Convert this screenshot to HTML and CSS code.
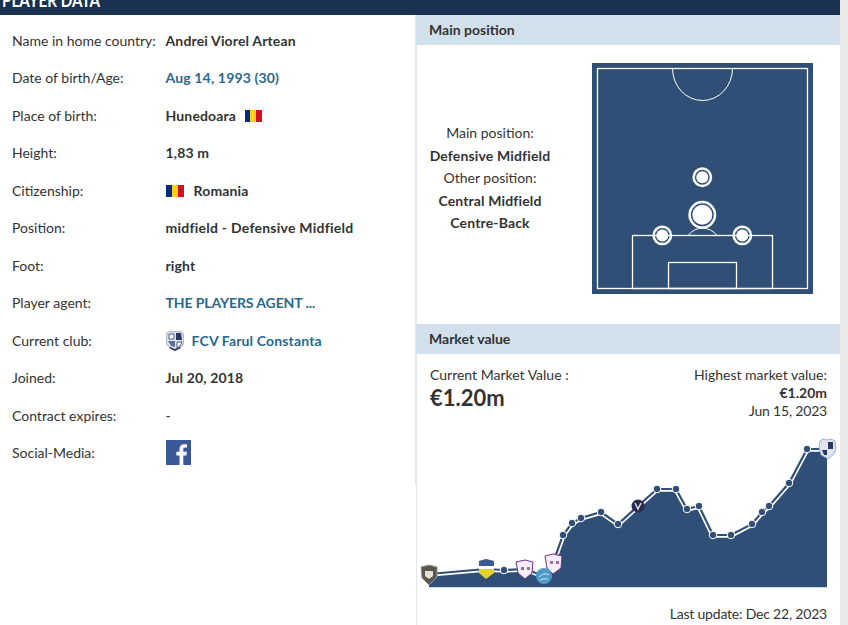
FILE: index.html
```html
<!DOCTYPE html>
<html lang="en">
<head>
  <meta charset="UTF-8" />
  <title>Player data</title>
  <link rel="stylesheet" href="styles.css">
</head>
<body>
  <div class="page">
    <div class="box">
      <h2 class="box-title"><span class="box-title-text">PLAYER DATA</span></h2>
      <div class="columns">
        <div class="data">
          <div class="row"><span class="label">Name in home country:</span><span class="value">Andrei Viorel Artean</span></div>
          <div class="row"><span class="label">Date of birth/Age:</span><a class="value link">Aug 14, 1993 (30)</a></div>
          <div class="row"><span class="label">Place of birth:</span><span class="value">Hunedoara <span class="flag flag-small"><i></i><i></i><i></i></span></span></div>
          <div class="row"><span class="label">Height:</span><span class="value">1,83 m</span></div>
          <div class="row"><span class="label">Citizenship:</span><span class="value"><span class="flag flag-big"><i></i><i></i><i></i></span>Romania</span></div>
          <div class="row"><span class="label">Position:</span><span class="value wide">midfield - Defensive Midfield</span></div>
          <div class="row"><span class="label">Foot:</span><span class="value">right</span></div>
          <div class="row"><span class="label">Player agent:</span><a class="value link agent">THE PLAYERS AGENT ...</a></div>
          <div class="row"><span class="label">Current club:</span><a class="value link club">
            <svg class="crest" width="18" height="21" viewBox="0 0 18 21">
              <path d="M1 3 L4 1 L7 2 L9 1 L11 2 L14 1 L17 3 L18 9 L17 15 L13 18 L9 21 L5 18 L1 15 L0 9Z" fill="#dfe3ee" stroke="#8390b5" stroke-width=".7"/>
              <path d="M10 3h5l1 7h-6z" fill="#27375f"/><path d="M2 11h7v6l-4-1z" fill="#5f6f9c"/>
              <path d="M3 4h5v5H3z" fill="#fff" stroke="#27375f" stroke-width=".8"/><path d="M11 12h5l-2 4-3 2z" fill="#fff" stroke="#27375f" stroke-width=".8"/>
              <path d="M3 18l6 3 6-3-1-1-5 2-5-2z" fill="#27375f"/>
            </svg>FCV Farul Constanta</a></div>
          <div class="row"><span class="label">Joined:</span><span class="value">Jul 20, 2018</span></div>
          <div class="row"><span class="label">Contract expires:</span><span class="value plain">-</span></div>
          <div class="row"><span class="label">Social-Media:</span><span class="value">
            <svg class="fb" width="25" height="25" viewBox="0 0 25 25"><rect width="25" height="25" fill="#3b5998"/><path d="M17.300 25v-9.600h3.100l.5-3.700h-3.600V9.400c0-1.100.3-1.800 1.800-1.800h1.900V4.300c-.3 0-1.500-.1-2.800-.1-2.800 0-4.700 1.700-4.700 4.800v2.700h-3.100v3.700h3.100V25z" fill="#fff"/></svg></span></div>
        </div>
        <div class="side">
          <h3 class="side-title">Main position</h3>
          <div class="position">
            <div class="position-text">
              <div>Main position:</div>
              <b>Defensive Midfield</b>
              <div>Other position:</div>
              <b>Central Midfield</b>
              <b>Centre-Back</b>
            </div>
            <svg class="pitch" width="221" height="231" viewBox="0 0 221 231">
              <rect width="221" height="231" fill="#304f77"/>
              <g fill="none" stroke="#fff" stroke-width="1.300">
                <rect x="5.500" y="5.500" width="210" height="220"/>
                <rect x="40.500" y="172.500" width="140" height="53"/>
                <rect x="76.500" y="199.500" width="68" height="26"/>
                <path d="M80.500 5.500a30 32 0 0 0 60 0" stroke-width="1"/>
                <path d="M96 172.500a18 18 0 0 1 29 0" stroke-width="1"/>
              </g>
              <g class="spot"><circle cx="110.300" cy="114.300" r="8.700"/><circle class="dot" cx="110.300" cy="114.300" r="6"/></g>
              <g class="spot"><circle cx="110.300" cy="151.800" r="12.700"/><circle class="dot" cx="110.300" cy="151.800" r="10"/></g>
              <g class="spot"><circle cx="70.300" cy="172.400" r="8.700"/><circle class="dot" cx="70.300" cy="172.400" r="6"/></g>
              <g class="spot"><circle cx="150.300" cy="172.400" r="8.700"/><circle class="dot" cx="150.300" cy="172.400" r="6"/></g>
            </svg>
          </div>
          <h3 class="side-title">Market value</h3>
          <div class="market">
            <div class="market-head">
              <div>Current Market Value :<div class="market-now">€1.20m</div></div>
              <div class="market-high">Highest market value:<b>€1.20m</b><span class="digits">Jun 15, 2023</span></div>
            </div>
            <svg class="chart" width="424" height="170" viewBox="0 0 424 170">
              <path d="M13 154 L70 149 L88 150 L109 149 L128 156 L137 143 L147 115 L156 103 L165 98 L185 92 L202 104 L222 86 L241 69 L260 69 L271 89 L283 86 L297 115 L315 115 L336 104 L346 92 L353 86 L373 63 L391 29 L411 29 L411 167 L13 167Z" fill="#304f77"/>
              <path d="M13 167H411" stroke="#c6d8e8" stroke-width="1" transform="translate(0 .5)"/>
              <path d="M13 154 L70 149 L88 150 L109 149 L128 156 L137 143 L147 115 L156 103 L165 98 L185 92 L202 104 L222 86 L241 69 L260 69 L271 89 L283 86 L297 115 L315 115 L336 104 L346 92 L353 86 L373 63 L391 29 L411 29" fill="none" stroke="#fff" stroke-width="5.500"/>
              <path d="M13 154 L70 149 L88 150 L109 149 L128 156 L137 143 L147 115 L156 103 L165 98 L185 92 L202 104 L222 86 L241 69 L260 69 L271 89 L283 86 L297 115 L315 115 L336 104 L346 92 L353 86 L373 63 L391 29 L411 29" fill="none" stroke="#304f77" stroke-width="2.200"/>
              <g fill="#304f77" stroke="#fff" stroke-width="1">
                <circle cx="88" cy="150" r="3.800"/><circle cx="147" cy="115" r="3.800"/><circle cx="156" cy="103" r="3.800"/><circle cx="165" cy="98" r="3.800"/><circle cx="185" cy="92" r="3.800"/><circle cx="202" cy="104" r="3.800"/><circle cx="241" cy="69" r="3.800"/><circle cx="260" cy="69" r="3.800"/><circle cx="271" cy="89" r="3.800"/><circle cx="283" cy="86" r="3.800"/><circle cx="297" cy="115" r="3.800"/><circle cx="315" cy="115" r="3.800"/><circle cx="336" cy="104" r="3.800"/><circle cx="346" cy="92" r="3.800"/><circle cx="353" cy="86" r="3.800"/><circle cx="373" cy="63" r="3.800"/><circle cx="391" cy="29" r="3.800"/>
              </g>
              <path d="M5 147 L13 145 L21 147 L21 157 L13 165 L6 158Z" fill="#57564f" stroke="#9a9a92"/><path d="M9 151h8v5l-4 3-4-3z" fill="#e2e0d8"/>
              <path d="M63 141 L70 139 L78 141 L78 153 L70 159 L63 153Z" fill="#e5d32c"/><path d="M63 141 L70 139 L78 141 L78 146 H63Z" fill="#3c5a94"/><path d="M63 146h15v3H63z" fill="#fff"/>
              <path d="M100 142 L109 140 L117 142 L116 153 L109 159 L102 153Z" fill="#f6eff8" stroke="#6b2f88"/><path d="M105 147h3v3h-3zM111 147h3v3h-3z" fill="#9c6cb4"/>
              <path d="M129 136 L137 134 L146 136 L145 148 L137 154 L131 148Z" fill="#f6eff8" stroke="#6b2f88"/><path d="M134 141h3v3h-3zM140 141h3v3h-3z" fill="#9c6cb4"/>
              <circle cx="128" cy="156" r="8" fill="#4e9ac6"/><path d="M123 157q5-5 10-2M124 160q4-2 8-1" fill="none" stroke="#cfe6f3" stroke-width="1"/>
              <circle cx="222" cy="86" r="6.500" fill="#2a2a52"/><path d="M219 83l3 6 3-6" fill="none" stroke="#ddd" stroke-width="1.500"/>
              <path d="M404 21 L407 19 L411 20 L415 19 L419 21 L420 28 L418 34 L412 39 L405 35 L403 28Z" fill="#dfe3ee" stroke="#8390b5" stroke-width=".7"/><path d="M412 22h5v7h-5zM406 30h5v5h-3z" fill="#27375f"/>
            </svg>
            <div class="updated">Last update: Dec 22, 2023</div>
          </div>
        </div>
      </div>
    </div>
  </div>
</body>
</html>
```
FILE: styles.css
```css
html, body {
  margin: 0;
  padding: 0;
  height: 100%;
  overflow: hidden;
}

body {
  font-family: 'Lato', sans-serif;
  font-size: 14px;
  color: #333;
  background: #e9e9e9;
}

.page {
  width: 840px;
  height: 625px;
  background: #fff;
  overflow: hidden;
}

.box-title {
  margin: 0;
  height: 15px;
  padding-left: 2px;
  background: #1a3151;
  color: #fff;
  font-size: 19px;
  font-weight: 700;
  line-height: 0;
  overflow: hidden;
}

.box-title-text {
  display: inline-block;
  transform: scaleX(.8);
  transform-origin: left center;
}

.columns {
  display: flex;
}

.data {
  width: 416px;
  height: 470px;
  box-sizing: border-box;
  padding: 6.500px 0 0 12px;
  border-right: 1px solid #e6e6e6;
}

.row {
  display: flex;
  align-items: center;
  height: 37.500px;
}

.label {
  width: 153.500px;
  flex-shrink: 0;
}

.value {
  font-weight: 700;
  letter-spacing: .15px;
  color: #333;
}

.wide { letter-spacing: .25px; }
.agent { letter-spacing: -.1px; }
.plain { font-weight: 400; }

.link { color: #28688f; }

.club {
  display: flex;
  align-items: center;
  gap: 8px;
}

.flag {
  display: inline-flex;
  vertical-align: -1px;
}

.flag i { display: block; height: 100%; width: 33.400%; }
.flag i:nth-child(1) { background: #002b7f; }
.flag i:nth-child(2) { background: #fcd116; }
.flag i:nth-child(3) { background: #ce1126; }

.flag-small { width: 17px; height: 12px; margin-left: 5px; }
.flag-big { width: 18px; height: 12px; margin-right: 10px; }

.fb, .crest { display: block; }

.side {
  width: 424px;
  flex-shrink: 0;
  box-sizing: border-box;
}

.side-title {
  margin: 0;
  height: 30px;
  line-height: 30px;
  padding-left: 13px;
  background: #d1e0ea;
  font-size: 14px;
  font-weight: 700;
  color: #333;
}

.position {
  display: flex;
  height: 279px;
  box-sizing: border-box;
  padding: 18px 0 0 12px;
  border-left: 1px solid #e6e6e6;
}

.position-text {
  width: 122px;
  margin-right: 41px;
  padding-top: 59px;
  text-align: center;
  line-height: 22.500px;
  white-space: nowrap;
}

.position-text b { display: block; letter-spacing: .15px; }

.market {
  height: 271px;
  box-sizing: border-box;
  padding: 12px 13px 0;
  border-left: 1px solid #e6e6e6;
}

.market-head {
  display: flex;
  justify-content: space-between;
  line-height: 18px;
}

.market-now {
  font-size: 22px;
  font-weight: 700;
  line-height: 26px;
  margin-top: 1px;
}

.market-high { text-align: right; }
.market-high b { display: block; }

.digits, .updated { letter-spacing: -.2px; }

.chart {
  display: block;
  margin-left: -14px;
}

.updated {
  text-align: right;
  margin-top: 15px;
  line-height: 17px;
}

.spot circle { fill: none; stroke: #fff; stroke-width: 2.500; }
.spot circle.dot { fill: #fff; stroke: none; }
```
